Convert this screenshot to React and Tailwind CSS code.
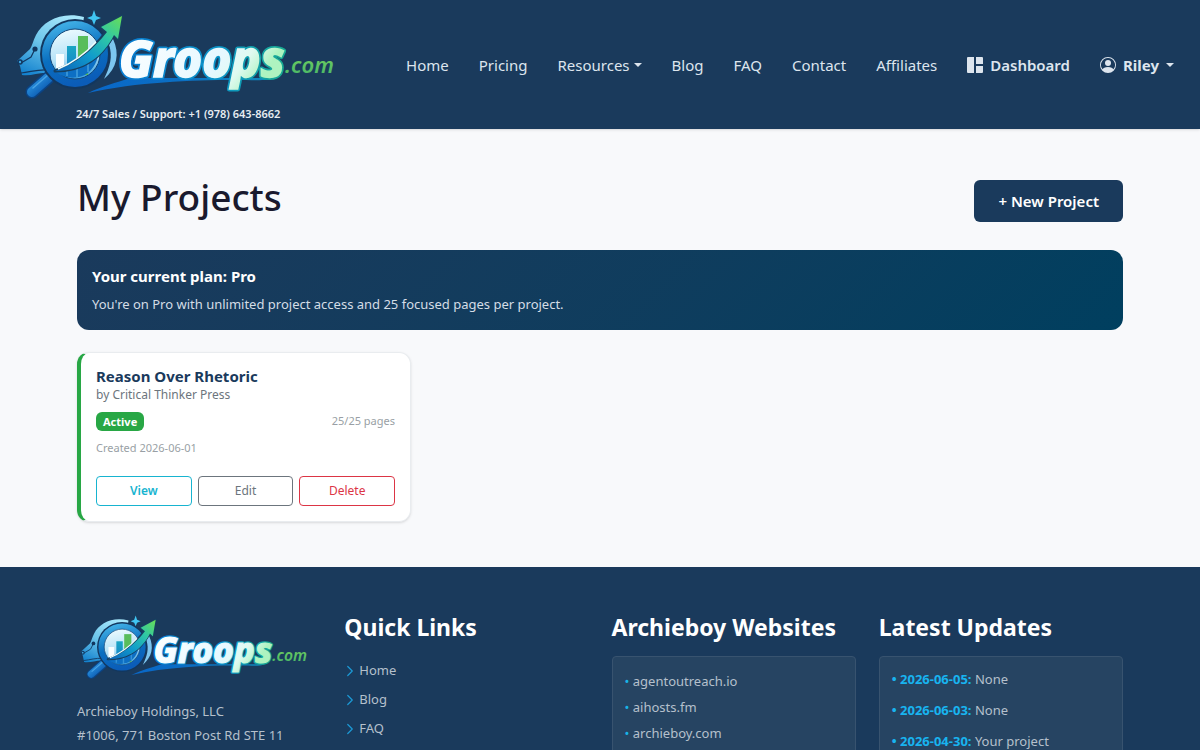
import React, { useId } from "react";

function Logo({ className }) {
  const id = useId();
  const u = (name) => `url(#${id}${name})`;
  return (
    <svg viewBox="0 0 330 100" className={className} role="img" aria-label="Groops.com">
      <defs>
        <linearGradient id={`${id}head`} x1="0.7" y1="0" x2="0.2" y2="1">
          <stop offset="0" stopColor="#a5e6fb" />
          <stop offset="0.5" stopColor="#6cc5ea" />
          <stop offset="1" stopColor="#1583cf" />
        </linearGradient>
        <linearGradient id={`${id}ring`} x1="0.3" y1="0" x2="0.6" y2="1">
          <stop offset="0" stopColor="#3dabe3" />
          <stop offset="0.5" stopColor="#0a6fc0" />
          <stop offset="1" stopColor="#0b5cb8" />
        </linearGradient>
        <linearGradient id={`${id}lens`} x1="0.4" y1="0" x2="0.6" y2="1">
          <stop offset="0" stopColor="#f2fdff" />
          <stop offset="0.55" stopColor="#b5e2f7" />
          <stop offset="1" stopColor="#2a94d8" />
        </linearGradient>
        <linearGradient id={`${id}arrow`} x1="0" y1="1" x2="1" y2="0">
          <stop offset="0" stopColor="#0c63b8" />
          <stop offset="0.4" stopColor="#109bcc" />
          <stop offset="0.7" stopColor="#2fc8a4" />
          <stop offset="1" stopColor="#6ade55" />
        </linearGradient>
        <linearGradient id={`${id}handle`} x1="0" y1="0" x2="1" y2="1">
          <stop offset="0" stopColor="#2f9be6" />
          <stop offset="1" stopColor="#0752aa" />
        </linearGradient>
        <linearGradient id={`${id}bar`} x1="0" y1="0" x2="0" y2="1">
          <stop offset="0" stopColor="#1aa6c4" />
          <stop offset="1" stopColor="#1277cc" />
        </linearGradient>
        <linearGradient id={`${id}edge`} x1="0" y1="0" x2="1" y2="0">
          <stop offset="0" stopColor="#087bd2" />
          <stop offset="0.6" stopColor="#0b94c8" />
          <stop offset="1" stopColor="#18aa91" />
        </linearGradient>
        <linearGradient id={`${id}word`} x1="0" y1="0" x2="1" y2="0.3">
          <stop offset="0" stopColor="#ffffff" />
          <stop offset="0.7" stopColor="#e6f8ff" />
          <stop offset="0.85" stopColor="#dffaf0" />
          <stop offset="1" stopColor="#aef3c0" />
        </linearGradient>
        <linearGradient id={`${id}com`} x1="0" y1="0" x2="0" y2="1">
          <stop offset="0" stopColor="#7cd65a" />
          <stop offset="1" stopColor="#43b36a" />
        </linearGradient>
        <linearGradient id={`${id}swoosh`} x1="0" y1="0" x2="1" y2="0">
          <stop offset="0" stopColor="#0967c8" />
          <stop offset="0.5" stopColor="#0b6fc4" />
          <stop offset="1" stopColor="#0f8cbc" />
        </linearGradient>
      </defs>

      <path d="M72 13C50 7 31 17 24 31C21 37 20 42 18 45L5 57L8 62L10 71C20 73 30 66 42 70L34 60C27 38 44 18 71 19Z" fill={u("head")} />
      <path d="M9 59L19 53L23 45" fill="none" stroke="#12375f" strokeWidth="1.2" />
      <path d="M9 69C19 68 26 65 36 66" fill="none" stroke="#12375f" strokeWidth="1.2" />
      <circle cx="23" cy="45" r="2.6" fill="#12375f" />
      <circle cx="8" cy="58" r="2.8" fill="#12375f" />
      <circle cx="8" cy="58" r="1.2" fill="#3da3dd" />
      <path d="M101 35C108 50 105 64 92 75C98 63 101 52 97 41Z" fill="#7cc5ef" />

      <path d="M36 74L20 88" stroke="#0a4384" strokeWidth="13" strokeLinecap="round" />
      <path d="M36 74L20 88" stroke={u("handle")} strokeWidth="10" strokeLinecap="round" />
      <path d="M36 71L21 84" stroke="#5db4ee" strokeWidth="1.5" strokeLinecap="round" opacity="0.7" />

      <circle cx="63" cy="50" r="35" fill="#12375f" />
      <circle cx="63" cy="50" r="29" fill={u("lens")} stroke={u("ring")} strokeWidth="8" />
      <circle cx="63" cy="50" r="25" fill="none" stroke="#114577" strokeWidth="1" />
      <path d="M44 50H52V68L44 64Z" fill="#f9feff" />
      <path d="M55 42H64V73H55Z" fill={u("bar")} />
      <path d="M66 32H76V71H66Z" fill="#58bd5b" />
      <path d="M43 67C59 63 72 57 85 42C88 52 84 62 76 69C68 75 52 76 43 67Z" fill="#0d6fc4" />
      <path d="M55 65V72M65 62V73M76 54V68" stroke="#5cb6e9" strokeWidth="2" opacity="0.5" />

      <path d="M43 67C65 59 81 46 94 28L89 23L110 12L106 35L101 31C91 51 74 67 43 67Z" fill="#164061" stroke="#164061" strokeWidth="3" strokeLinejoin="round" />
      <path d="M43 67C65 59 81 46 95 28L89 23L110 12L106 35L102 31C92 51 74 67 43 67Z" fill={u("arrow")} />
      <path d="M46 65C63 58 74 49 84 38" fill="none" stroke="#efffff" strokeWidth="1.5" />
      <path d="M82 6L84 12L89 14L84 16L82 21L80 16L75 14L80 12Z" fill="#40c5f2" />

      <path d="M76 89C90 82 104 79 118 74H262C256 77 245 76 222 76C180 76 125 78 76 89Z" fill={u("swoosh")} />
      <g fontFamily="'Noto Sans', sans-serif" fontStyle="italic" fontWeight="800" fontSize="49">
        <text x="107" y="73" fill={u("edge")} stroke={u("edge")} strokeWidth="5" strokeLinejoin="round">Groops</text>
        <text x="107" y="73" fill={u("word")} stroke={u("word")} strokeWidth="1.5">Groops</text>
      </g>
      <text x="273" y="69" fontSize="22" fontFamily="'Noto Sans', sans-serif" fontStyle="italic" fontWeight="600" fill={u("com")}>.com</text>
    </svg>
  );
}

function Caret() {
  return <span aria-hidden="true" className="inline-block border-x-4 border-t-4 border-x-transparent border-t-current" />;
}

function DashboardIcon() {
  return (
    <svg viewBox="0 0 16 16" className="size-4" fill="currentColor" aria-hidden="true">
      <path d="M0 1a1 1 0 0 1 1-1h6v16H1a1 1 0 0 1-1-1ZM9 0h6a1 1 0 0 1 1 1v6H9ZM9 9h7v6a1 1 0 0 1-1 1H9Z" />
    </svg>
  );
}

function PersonIcon() {
  return (
    <svg viewBox="0 0 16 16" className="size-4" fill="currentColor" aria-hidden="true">
      <path d="M11 6a3 3 0 1 1-6 0 3 3 0 0 1 6 0" />
      <path fillRule="evenodd" d="M0 8a8 8 0 1 1 16 0A8 8 0 0 1 0 8m8-7a7 7 0 0 0-5.468 11.37C3.242 11.226 4.805 10 8 10s4.757 1.225 5.468 2.37A7 7 0 0 0 8 1" />
    </svg>
  );
}

function Chevron() {
  return (
    <svg viewBox="0 0 16 16" className="size-3" fill="none" stroke="#1c9ad6" strokeWidth="1.6" strokeLinecap="round" strokeLinejoin="round" aria-hidden="true">
      <path d="M5 2l6 6-6 6" />
    </svg>
  );
}

function Header() {
  return (
    <header className="flex items-center justify-between bg-[#1a3a5c] px-3 text-[#dde5ee] shadow-sm">
      <div className="pt-1 pb-[5px]">
        <a href="#home" className="block"><Logo className="h-[100px] w-[330px]" /></a>
        <p className="pl-16 text-[11px] leading-5 font-semibold text-[#e8edf2]">24/7 Sales / Support: +1 (978) 643-8662</p>
      </div>
      <nav className="flex items-center gap-[30px] pr-[14px] text-[15px] leading-6">
        <a href="#home">Home</a>
        <a href="#pricing">Pricing</a>
        <button type="button" className="flex items-center gap-1">Resources <Caret /></button>
        <a href="#blog">Blog</a>
        <a href="#faq">FAQ</a>
        <a href="#contact">Contact</a>
        <a href="#affiliates">Affiliates</a>
        <a href="#dashboard" className="flex items-center gap-[7px] font-semibold"><DashboardIcon />Dashboard</a>
        <button type="button" className="flex items-center gap-[7px] font-bold"><PersonIcon />Riley <Caret /></button>
      </nav>
    </header>
  );
}

function ProjectCard() {
  return (
    <article className="max-w-[334px] rounded-xl border border-l-4 border-[#e9ecef] border-l-[#28a745] bg-white px-[15px] pt-3 pb-[15px] shadow-sm">
      <h2 className="text-[15px] leading-[22px] font-bold text-[#1a3a5c]">Reason Over Rhetoric</h2>
      <p className="text-xs leading-4 text-[#6c757d]">by Critical Thinker Press</p>
      <div className="mt-[9px] flex items-center justify-between">
        <span className="rounded-md bg-[#28a745] px-[7px] text-[11px] leading-[19px] font-bold text-white">Active</span>
        <span className="text-[11px] text-[#999fa5]">25/25 pages</span>
      </div>
      <p className="mt-2 text-[11px] leading-[18px] text-[#999fa5]">Created 2026-06-01</p>
      <div className="mt-[19px] grid grid-cols-3 gap-[6px] text-xs">
        <button type="button" className="h-[30px] rounded border border-[#17b4d0] font-semibold text-[#17b4d0]">View</button>
        <button type="button" className="h-[30px] rounded border border-[#6c757d] text-[#6c757d]">Edit</button>
        <button type="button" className="h-[30px] rounded border border-[#dc3545] text-[#dc3545]">Delete</button>
      </div>
    </article>
  );
}

const quickLinks = ["Home", "Blog", "FAQ"];
const websites = ["agentoutreach.io", "aihosts.fm", "archieboy.com"];
const updates = [
  ["2026-06-05", "None"],
  ["2026-06-03", "None"],
  ["2026-04-30", "Your project"],
];

function FooterHeading({ children }) {
  return <h2 className="text-[23px] leading-8 font-bold whitespace-nowrap text-white">{children}</h2>;
}

function Footer() {
  return (
    <footer className="flex-1 bg-[#1a3a5c] text-[13px] text-[#b5c0cc]">
      <div className="mx-auto grid max-w-[1046px] grid-cols-4 gap-[23px] pt-11">
        <div>
          <Logo className="h-[72px] w-[236px]" />
          <address className="mt-4 leading-6 not-italic">
            Archieboy Holdings, LLC<br />#1006, 771 Boston Post Rd STE 11
          </address>
        </div>
        <div>
          <FooterHeading>Quick Links</FooterHeading>
          <ul className="mt-[17px] space-y-2">
            {quickLinks.map((label) => (
              <li key={label}>
                <a href={`#${label.toLowerCase()}`} className="flex items-center gap-[3px] leading-[21px]"><Chevron />{label}</a>
              </li>
            ))}
          </ul>
        </div>
        <div>
          <FooterHeading>Archieboy Websites</FooterHeading>
          <ul className="mt-[13px] space-y-[5px] rounded border border-[#38536f] bg-[#264462] px-3 pt-[14px] pb-4">
            {websites.map((site) => (
              <li key={site} className="leading-[21px]">
                <span className="text-[#18b4e8]">•</span> <a href={`https://${site}`}>{site}</a>
              </li>
            ))}
          </ul>
        </div>
        <div>
          <FooterHeading>Latest Updates</FooterHeading>
          <ul className="mt-[13px] space-y-[10px] rounded border border-[#38536f] bg-[#264462] px-3 pt-3 pb-4">
            {updates.map(([date, text]) => (
              <li key={date} className="leading-[21px]">
                <strong className="font-bold text-[#18b4f0]">• {date}:</strong> {text}
              </li>
            ))}
          </ul>
        </div>
      </div>
    </footer>
  );
}

export default function App() {
  return (
    <div className="flex min-h-screen flex-col bg-[#f8f9fb] font-['Noto_Sans',sans-serif]">
      <Header />
      <main className="mx-auto w-full max-w-[1046px] pt-[39px] pb-[45px]">
        <div className="flex items-center justify-between">
          <h1 className="pb-2 text-[37px] leading-[58px] font-medium text-[#1a1a2e]">My Projects</h1>
          <button type="button" className="rounded-md bg-[#1a3a5c] px-6 py-[9px] text-[15px] leading-6 font-semibold text-white">+ New Project</button>
        </div>
        <section className="mt-4 rounded-xl bg-linear-135 from-[#1a3a5c] to-[#003f5f] p-[15px]">
          <h2 className="text-[15px] leading-[22px] font-bold text-white">Your current plan: Pro</h2>
          <p className="mt-[7px] text-[13px] leading-[21px] text-[#d4dde6]">You're on Pro with unlimited project access and 25 focused pages per project.</p>
        </section>
        <div className="mt-[22px]"><ProjectCard /></div>
      </main>
      <Footer />
    </div>
  );
}
